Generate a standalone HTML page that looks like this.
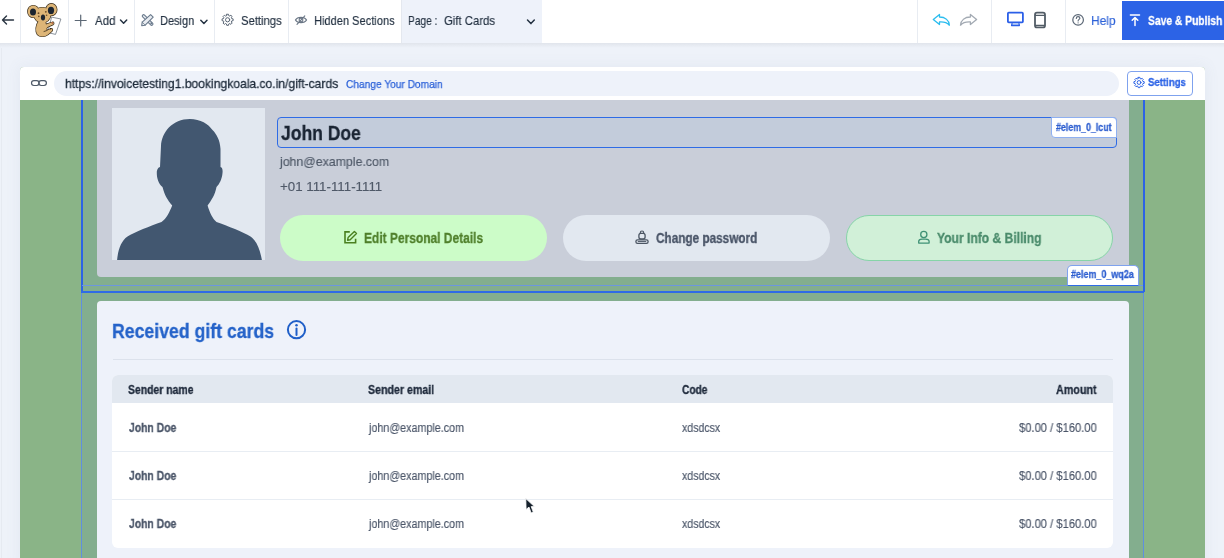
<!DOCTYPE html>
<html><head><meta charset="utf-8">
<style>
*{margin:0;padding:0;box-sizing:border-box}
html,body{width:1224px;height:558px;overflow:hidden;background:#EEF2F9;font-family:"Liberation Sans",sans-serif;color:#223040}
.a{position:absolute}
.t{position:absolute;white-space:nowrap;line-height:1;transform-origin:0 0;will-change:transform}
.sep{position:absolute;top:0;width:1px;height:43px;background:#E8ECF2}
svg{position:absolute;overflow:visible}
</style></head><body>

<!-- top bar -->
<div class="a" style="left:0;top:0;width:1224px;height:43px;background:#fff"></div>
<div class="a" style="left:0;top:43px;width:1224px;height:5px;background:linear-gradient(#E1E5EC,#EEF2F9)"></div>
<div class="sep" style="left:20px"></div>
<div class="a" style="left:1px;top:48px;width:1px;height:510px;background:#E6EAF1"></div>
<div class="sep" style="left:68px"></div>
<div class="sep" style="left:134px"></div>
<div class="sep" style="left:214px"></div>
<div class="sep" style="left:288px"></div>
<div class="a" style="left:401px;top:0;width:141px;height:43px;background:#EEF2FA;border-left:1px solid #E4E8EF"></div>
<div class="sep" style="left:917px"></div>
<div class="sep" style="left:991px"></div>
<div class="sep" style="left:1065px"></div>
<div class="a" style="left:1122px;top:1px;width:102px;height:39px;background:#2C63E6"></div>

<!-- preview frame -->
<div class="a" style="left:20px;top:67px;width:1185px;height:500px;background:#8AB487;border-radius:4px 4px 0 0;box-shadow:0 0 14px 3px rgba(100,115,140,0.055)"></div>
<div class="a" style="left:20px;top:67px;width:1185px;height:33px;background:#fff;border-radius:4px 4px 0 0"></div>
<div class="a" style="left:54px;top:71px;width:1065px;height:25px;background:#EEF2FA;border-radius:13px"></div>
<div class="a" style="left:1127px;top:71px;width:66px;height:25px;border:1px solid #7FA2EE;border-radius:4px;background:#fff"></div>

<!-- section overlay -->
<div class="a" style="left:81px;top:100px;width:1063px;height:458px;background:#83AE8E"></div>
<div class="a" style="left:81px;top:100px;width:1.5px;height:192px;background:#2C63E6"></div>
<div class="a" style="left:1143px;top:100px;width:1.5px;height:192px;background:#2C63E6"></div>
<div class="a" style="left:81px;top:292px;width:1px;height:266px;background:#5F8FE0"></div>
<div class="a" style="left:1143px;top:292px;width:1px;height:266px;background:#5F8FE0"></div>

<!-- profile container -->
<div class="a" style="left:97px;top:100px;width:1032px;height:176.5px;background:#C9CED9;border-radius:0 0 4px 4px"></div>
<div class="a" style="left:112px;top:108px;width:153px;height:152px;background:#E2E8F0;overflow:hidden">
 <svg style="left:0;top:0" width="153" height="152" viewBox="0 0 152 152"><path d="M4.6 152 C5.5 142 8.5 133 15 128.5 C22 124 38 118 49 114 C54 111 57 104 59.7 97.6 C55 92 52 87 50 79 C46 76 44.3 70 44.3 65 C44.3 61 46 59.5 47.5 59 L48.5 38 C49 24 60 11 77.4 10.9 C88 11 96 16 100 22 C104 26 107.5 32 108 41 L108 59 C110 59.5 110.3 62 110 65 C109.5 71 107 76 104 79 C102.5 87 99 92 95.1 97.6 C97 104 100 111 104 114 C115 118 131 124 138 128.5 C144.5 133 147.5 142 149.4 152 Z" fill="#425770"/></svg>
</div>

<div class="a" style="left:277px;top:117px;width:840px;height:31px;background:#C3CCDB;border:1.6px solid #2E6BE6;border-radius:4px"></div>
<div class="a" style="left:1051px;top:117px;width:66px;height:21px;background:#fff;border:1px solid #8FB0F0;border-radius:0 4px 0 4px"></div>

<!-- buttons -->
<div class="a" style="left:280px;top:215px;width:267px;height:46px;background:#CCFCC8;border-radius:23px"></div>
<div class="a" style="left:563px;top:215px;width:267px;height:46px;background:#E2E8F0;border-radius:23px"></div>
<div class="a" style="left:846px;top:215px;width:267px;height:46px;background:#D1F0D8;border:1px solid #86D4A8;border-radius:23px"></div>

<!-- wq2a lines & label -->
<div class="a" style="left:82px;top:285px;width:1061px;height:1px;background:#6C96E0"></div>
<div class="a" style="left:81px;top:291px;width:1063px;height:1.5px;background:#2E6BE6"></div>
<div class="a" style="left:1067px;top:264.5px;width:72px;height:21px;background:#fff;border:1px solid #7FA2EE;border-bottom:1.5px solid #2E6BE6;border-radius:5px 5px 0 0"></div>

<!-- gift cards -->
<div class="a" style="left:97px;top:301px;width:1032px;height:270px;background:#EEF2FA;border-radius:4px"></div>
<div class="a" style="left:113px;top:359px;width:1000px;height:1px;background:#DCE2EC"></div>
<div class="a" style="left:112px;top:375px;width:1001px;height:173px;background:#fff;border-radius:6px;overflow:hidden">
 <div class="a" style="left:0;top:0;width:1001px;height:28px;background:#E2E8F0"></div>
 <div class="a" style="left:0;top:76px;width:1001px;height:1px;background:#E8EDF3"></div>
 <div class="a" style="left:0;top:124px;width:1001px;height:1px;background:#E8EDF3"></div>
</div>

<!-- icons overlay (page coords) -->
<svg style="left:0;top:0" width="1224" height="558" viewBox="0 0 1224 558" fill="none" stroke-linecap="round" stroke-linejoin="round">
 <!-- back arrow -->
 <path d="M6.5 16 L2.5 20 L6.5 24 M2.5 20 H13.5" stroke="#2A3542" stroke-width="1.4"/>
 <!-- koala -->
 <g transform="translate(24,0)">
  <path d="M28 17.2 L36.9 19 L31.5 34.4 L24 32.6 Z" fill="#fff" stroke="#6F7884" stroke-width="0.8"/>
  <g stroke="#3A2E1C" stroke-width="1.4" fill="#3A2E1C">
   <ellipse cx="9.3" cy="11.5" rx="5.5" ry="5.9"/>
   <ellipse cx="27.4" cy="9.7" rx="5.4" ry="5.9"/>
   <ellipse cx="18.3" cy="15.2" rx="8.2" ry="7.6"/>
   <path d="M14.5 21.5 C12 25 11 31 13.5 34.5 C15.5 37 21 37 24 34.5 L27.5 31.5 C29 30.5 28.5 28.5 27 28.8 L23 30.5 C22 29 22.5 27.5 24 26.8 L29 24.5 C30.5 23.5 29.5 21.5 28 22.3 L22 24.5 C21.5 23 21.5 22 21.5 21.5 Z"/>
  </g>
  <g fill="#DDB577">
   <ellipse cx="9.3" cy="11.5" rx="5.5" ry="5.9"/>
   <ellipse cx="27.4" cy="9.7" rx="5.4" ry="5.9"/>
   <ellipse cx="18.3" cy="15.2" rx="8.2" ry="7.6"/>
   <path d="M14.5 21.5 C12 25 11 31 13.5 34.5 C15.5 37 21 37 24 34.5 L27.5 31.5 C29 30.5 28.5 28.5 27 28.8 L23 30.5 C22 29 22.5 27.5 24 26.8 L29 24.5 C30.5 23.5 29.5 21.5 28 22.3 L22 24.5 C21.5 23 21.5 22 21.5 21.5 Z"/>
  </g>
  <ellipse cx="9" cy="12" rx="3" ry="3.5" fill="#1C2530"/>
  <ellipse cx="27" cy="10.4" rx="3.1" ry="3.7" fill="#1C2530"/>
  <ellipse cx="19" cy="17.6" rx="2.1" ry="3" fill="#1C2530"/>
  <circle cx="14.5" cy="13.2" r="0.9" fill="#6a4a25"/><circle cx="21.8" cy="11.8" r="0.9" fill="#6a4a25"/>
  <circle cx="14.8" cy="16.4" r="0.8" fill="#6a4a25"/><circle cx="22.6" cy="15.2" r="0.8" fill="#6a4a25"/>
  <path d="M23 30.5 L20 31.5" stroke="#3A2E1C" stroke-width="0.8"/>
  <circle cx="28.3" cy="23" r="0.7" fill="#b03a2a"/><circle cx="26.5" cy="28.8" r="0.7" fill="#2a1a10"/>
 </g>
 <!-- plus -->
 <path d="M80.7 15 V26 M75.2 20.5 H86.2" stroke="#5D6875" stroke-width="1.2"/>
 <!-- chevrons -->
 <path d="M120.5 20 L123.6 23.2 L126.7 20" stroke="#243242" stroke-width="1.5"/>
 <path d="M200.8 20.2 L203.9 23.4 L207 20.2" stroke="#243242" stroke-width="1.5"/>
 <path d="M527.5 20 L530.9 23.6 L534.3 20" stroke="#243242" stroke-width="1.5"/>
 <!-- design icon -->
 <path d="M143.6 16 L151.6 24" stroke="#6A7A8C" stroke-width="3.8"/>
 <path d="M143.6 16 L151.6 24" stroke="#E9EDF2" stroke-width="1.6"/>
 <circle cx="151.3" cy="23.2" r="1" fill="#6A7A8C" stroke="none"/>
 <path d="M150.6 14.6 L153.2 17.2 L145.2 25.2 L141.7 25.7 L142.2 22.1 Z" stroke="#6A7A8C" stroke-width="1.1" fill="#E9EDF2"/>
 <path d="M142.2 22.1 L145.2 25.2" stroke="#6A7A8C" stroke-width="0.8"/>
 <!-- gear -->
 <path d="M226.72 14.27 L228.48 14.27 L228.75 15.66 L229.72 16.06 L230.89 15.27 L232.13 16.51 L231.34 17.68 L231.74 18.65 L233.13 18.92 L233.13 20.68 L231.74 20.95 L231.34 21.92 L232.13 23.09 L230.89 24.33 L229.72 23.54 L228.75 23.94 L228.48 25.33 L226.72 25.33 L226.45 23.94 L225.48 23.54 L224.31 24.33 L223.07 23.09 L223.86 21.92 L223.46 20.95 L222.07 20.68 L222.07 18.92 L223.46 18.65 L223.86 17.68 L223.07 16.51 L224.31 15.27 L225.48 16.06 L226.45 15.66 Z" stroke="#5A6675" stroke-width="1"/>
 <circle cx="227.6" cy="19.8" r="2.1" stroke="#5A6675" stroke-width="1"/>
 <!-- eye slash -->
 <path d="M295.4 20 C297.5 16.5 304.5 16.5 306.6 20 C304.5 23.5 297.5 23.5 295.4 20 Z" stroke="#6A7685" stroke-width="1.1"/>
 <circle cx="301" cy="20" r="1.9" stroke="#6A7685" stroke-width="1.1"/>
 <path d="M304.8 15.8 L297 24.4" stroke="#6A7685" stroke-width="1.1"/>
 <!-- undo / redo -->
 <path d="M933.3 19.5 L939.5 14.5 L939.5 17 C945 17 949 20 949.4 25.2 C947 22.5 943 21.8 939.5 22 L939.5 24.6 Z" stroke="#2BBDEF" stroke-width="1.3"/>
 <path d="M976.6 19.5 L970.4 14.5 L970.4 17 C964.9 17 960.9 20 960.5 25.2 C962.9 22.5 966.9 21.8 970.4 22 L970.4 24.6 Z" stroke="#A3AAB3" stroke-width="1.3"/>
 <!-- desktop -->
 <rect x="1007.9" y="12.7" width="15" height="9.7" rx="0.8" stroke="#2B5FE8" stroke-width="1.8"/>
 <path d="M1012 23.6 L1011.6 25.6 H1019.4 L1019 23.6" stroke="#2B5FE8" stroke-width="1.3" fill="#9DB8F2"/>
 <!-- mobile -->
 <rect x="1035" y="12.7" width="10" height="14.7" rx="2" stroke="#525C66" stroke-width="1.8"/>
 <path d="M1035.5 15.3 H1044.5 M1035.5 25.3 H1044.5" stroke="#525C66" stroke-width="1.3"/>
 <!-- help -->
 <circle cx="1078.1" cy="19.9" r="5.3" stroke="#5A6675" stroke-width="1.2"/>
 <path d="M1076.3 18.4 C1076.3 17.2 1077 16.6 1078.1 16.6 C1079.2 16.6 1079.9 17.3 1079.9 18.2 C1079.9 19.4 1078.1 19.5 1078.1 21" stroke="#5A6675" stroke-width="1.1"/>
 <circle cx="1078.1" cy="22.8" r="0.6" fill="#5A6675" stroke="none"/>
 <!-- upload -->
 <path d="M1130.4 15 H1139.5 M1135 25.4 V17.6 M1132.2 20.3 L1135 17.5 L1137.8 20.3" stroke="#fff" stroke-width="1.5"/>
 <!-- link -->
 <rect x="31.5" y="80.6" width="7.6" height="4.9" rx="2.4" stroke="#4F5A68" stroke-width="1.2"/>
 <rect x="38.8" y="80.6" width="7.6" height="4.9" rx="2.4" stroke="#4F5A68" stroke-width="1.2"/>
 <!-- settings btn gear -->
 <path d="M1138.24 77.36 L1139.86 77.36 L1140.12 78.65 L1141.02 79.02 L1142.11 78.29 L1143.26 79.44 L1142.53 80.53 L1142.90 81.43 L1144.19 81.69 L1144.19 83.31 L1142.90 83.57 L1142.53 84.47 L1143.26 85.56 L1142.11 86.71 L1141.02 85.98 L1140.12 86.35 L1139.86 87.64 L1138.24 87.64 L1137.98 86.35 L1137.08 85.98 L1135.99 86.71 L1134.84 85.56 L1135.57 84.47 L1135.20 83.57 L1133.91 83.31 L1133.91 81.69 L1135.20 81.43 L1135.57 80.53 L1134.84 79.44 L1135.99 78.29 L1137.08 79.02 L1137.98 78.65 Z" stroke="#2C63E6" stroke-width="1"/>
 <circle cx="1139.05" cy="82.5" r="1.9" stroke="#2C63E6" stroke-width="1"/>
 <!-- edit icon -->
 <path d="M349.8 231.9 H345 V242.8 H355.6 V238.8" stroke="#4A8020" stroke-width="1.6" stroke-linecap="butt" stroke-linejoin="miter"/>
 <path d="M347.6 240.2 L348.1 237.6 L354.4 231.4 L356.5 233.5 L350.2 239.8 Z" stroke="#4A8020" stroke-width="1.4"/>
 <!-- lock icon -->
 <path d="M640.3 233.4 V232.7 A1.7 1.7 0 0 1 643.7 232.7 V233.4" stroke="#4B5563" stroke-width="1.2"/>
 <rect x="638.9" y="233.4" width="6.2" height="5.6" rx="2" stroke="#4B5563" stroke-width="1.3"/>
 <rect x="635.9" y="239.8" width="12.2" height="3.6" rx="1.6" stroke="#4B5563" stroke-width="1.3"/>
 <path d="M638.2 241.5 H645.8" stroke="#4B5563" stroke-width="0.9"/>
 <!-- user icon -->
 <circle cx="923.8" cy="234.5" r="3.1" stroke="#3F9175" stroke-width="1.3"/>
 <path d="M918.7 243.1 V241.6 C918.7 239.8 920 239.1 922 239.1 H925.6 C927.6 239.1 929.1 239.8 929.1 241.6 V243.1 Z" stroke="#3F9175" stroke-width="1.3"/>
 <!-- info icon -->
 <circle cx="296.5" cy="329.7" r="8.6" stroke="#1F5FC8" stroke-width="2"/>
 <circle cx="296.5" cy="325.2" r="1.25" fill="#1F5FC8" stroke="none"/>
 <path d="M296.5 328.6 V335" stroke="#1F5FC8" stroke-width="2"/>
</svg>

<div class="t" style="left:94.50px;top:14.00px;font-size:13px;font-weight:400;color:#243242;transform:scaleX(0.8818);-webkit-text-stroke:0.15px #243242">Add</div>
<div class="t" style="left:160.15px;top:14.00px;font-size:13px;font-weight:400;color:#243242;transform:scaleX(0.8462);-webkit-text-stroke:0.15px #243242">Design</div>
<div class="t" style="left:240.53px;top:14.00px;font-size:13px;font-weight:400;color:#243242;transform:scaleX(0.8652);-webkit-text-stroke:0.15px #243242">Settings</div>
<div class="t" style="left:313.85px;top:14.00px;font-size:13px;font-weight:400;color:#243242;transform:scaleX(0.8516);-webkit-text-stroke:0.15px #243242">Hidden Sections</div>
<div class="t" style="left:407.92px;top:14.00px;font-size:13px;font-weight:400;color:#243242;transform:scaleX(0.7806);-webkit-text-stroke:0.15px #243242">Page :</div>
<div class="t" style="left:444.43px;top:14.00px;font-size:13px;font-weight:400;color:#243242;transform:scaleX(0.8719);-webkit-text-stroke:0.15px #243242">Gift Cards</div>
<div class="t" style="left:1091.08px;top:14.00px;font-size:13px;font-weight:400;color:#2D62D8;transform:scaleX(0.9200);-webkit-text-stroke:0.15px #2D62D8">Help</div>
<div class="t" style="left:1147.91px;top:14.00px;font-size:13px;font-weight:700;color:#ffffff;transform:scaleX(0.7913);-webkit-text-stroke:0.3px #ffffff">Save &amp; Publish</div>
<div class="t" style="left:65.07px;top:77.00px;font-size:13px;font-weight:400;color:#1E2B3A;transform:scaleX(0.9312);-webkit-text-stroke:0.3px #1E2B3A">https://invoicetesting1.bookingkoala.co.in/gift-cards</div>
<div class="t" style="left:346.08px;top:78.50px;font-size:11px;font-weight:400;color:#2A60D8;transform:scaleX(0.9243);-webkit-text-stroke:0.25px #2A60D8">Change Your Domain</div>
<div class="t" style="left:1148.40px;top:77.00px;font-size:10.5px;font-weight:700;color:#2C63E6;transform:scaleX(0.9146);-webkit-text-stroke:0.3px #2C63E6">Settings</div>
<div class="t" style="left:281.00px;top:123.00px;font-size:20.5px;font-weight:700;color:#1A2433;transform:scaleX(0.8538);-webkit-text-stroke:0.3px #1A2433">John Doe</div>
<div class="t" style="left:1056.10px;top:123.00px;font-size:10px;font-weight:700;color:#2E5FD0;transform:scaleX(0.8841);-webkit-text-stroke:0.3px #2E5FD0">#elem_0_lcut</div>
<div class="t" style="left:280.10px;top:155.00px;font-size:13px;font-weight:400;color:#4F5968;transform:scaleX(0.9482);-webkit-text-stroke:0.15px #4F5968">john@example.com</div>
<div class="t" style="left:280.08px;top:180.00px;font-size:13px;font-weight:400;color:#4F5968;transform:scaleX(1.0235);-webkit-text-stroke:0.15px #4F5968">+01 111-111-1111</div>
<div class="t" style="left:364.44px;top:231.00px;font-size:14px;font-weight:700;color:#4F7F2A;transform:scaleX(0.8551);-webkit-text-stroke:0.3px #4F7F2A">Edit Personal Details</div>
<div class="t" style="left:656.06px;top:231.00px;font-size:14px;font-weight:700;color:#4A5568;transform:scaleX(0.8403);-webkit-text-stroke:0.3px #4A5568">Change password</div>
<div class="t" style="left:937.44px;top:231.00px;font-size:14px;font-weight:700;color:#4A8B6B;transform:scaleX(0.8630);-webkit-text-stroke:0.3px #4A8B6B">Your Info &amp; Billing</div>
<div class="t" style="left:1071.40px;top:270.00px;font-size:10px;font-weight:700;color:#2E5FD0;transform:scaleX(0.8957);-webkit-text-stroke:0.3px #2E5FD0">#elem_0_wq2a</div>
<div class="t" style="left:112.24px;top:320.50px;font-size:20.5px;font-weight:700;color:#2563C9;transform:scaleX(0.8624);-webkit-text-stroke:0.3px #2563C9">Received gift cards</div>
<div class="t" style="left:128.03px;top:384.00px;font-size:12px;font-weight:700;color:#1E293B;transform:scaleX(0.8689);-webkit-text-stroke:0.3px #1E293B">Sender name</div>
<div class="t" style="left:367.71px;top:384.00px;font-size:12px;font-weight:700;color:#1E293B;transform:scaleX(0.8863);-webkit-text-stroke:0.3px #1E293B">Sender email</div>
<div class="t" style="left:682.40px;top:384.00px;font-size:12px;font-weight:700;color:#1E293B;transform:scaleX(0.8467);-webkit-text-stroke:0.3px #1E293B">Code</div>
<div class="t" style="left:1055.90px;top:384.00px;font-size:12px;font-weight:700;color:#1E293B;transform:scaleX(0.8956);-webkit-text-stroke:0.3px #1E293B">Amount</div>
<div class="t" style="left:128.50px;top:422.00px;font-size:12px;font-weight:700;color:#4A5568;transform:scaleX(0.8648);-webkit-text-stroke:0.3px #4A5568">John Doe</div>
<div class="t" style="left:368.60px;top:422.00px;font-size:12px;font-weight:400;color:#4A5568;transform:scaleX(0.8943);-webkit-text-stroke:0.15px #4A5568">john@example.com</div>
<div class="t" style="left:682.40px;top:422.00px;font-size:12px;font-weight:400;color:#4A5568;transform:scaleX(0.8814);-webkit-text-stroke:0.15px #4A5568">xdsdcsx</div>
<div class="t" style="left:1018.80px;top:422.00px;font-size:12px;font-weight:400;color:#4A5568;transform:scaleX(0.9325);-webkit-text-stroke:0.15px #4A5568">$0.00 / $160.00</div>
<div class="t" style="left:128.50px;top:470.00px;font-size:12px;font-weight:700;color:#4A5568;transform:scaleX(0.8648);-webkit-text-stroke:0.3px #4A5568">John Doe</div>
<div class="t" style="left:368.60px;top:470.00px;font-size:12px;font-weight:400;color:#4A5568;transform:scaleX(0.8943);-webkit-text-stroke:0.15px #4A5568">john@example.com</div>
<div class="t" style="left:682.40px;top:470.00px;font-size:12px;font-weight:400;color:#4A5568;transform:scaleX(0.8814);-webkit-text-stroke:0.15px #4A5568">xdsdcsx</div>
<div class="t" style="left:1018.80px;top:470.00px;font-size:12px;font-weight:400;color:#4A5568;transform:scaleX(0.9325);-webkit-text-stroke:0.15px #4A5568">$0.00 / $160.00</div>
<div class="t" style="left:128.50px;top:518.00px;font-size:12px;font-weight:700;color:#4A5568;transform:scaleX(0.8648);-webkit-text-stroke:0.3px #4A5568">John Doe</div>
<div class="t" style="left:368.60px;top:518.00px;font-size:12px;font-weight:400;color:#4A5568;transform:scaleX(0.8943);-webkit-text-stroke:0.15px #4A5568">john@example.com</div>
<div class="t" style="left:682.40px;top:518.00px;font-size:12px;font-weight:400;color:#4A5568;transform:scaleX(0.8814);-webkit-text-stroke:0.15px #4A5568">xdsdcsx</div>
<div class="t" style="left:1018.80px;top:518.00px;font-size:12px;font-weight:400;color:#4A5568;transform:scaleX(0.9325);-webkit-text-stroke:0.15px #4A5568">$0.00 / $160.00</div>

<!-- cursor -->
<svg style="left:0;top:0" width="1224" height="558" viewBox="0 0 1224 558">
 <path d="M525.8 498.6 L526.1 509.4 L529 507.1 L531.1 512.9 L533.3 512.1 L531.2 506.6 L534.4 506.6 Z" fill="#15202B" stroke="#fff" stroke-width="0.8" stroke-linejoin="round"/>
</svg>
</body></html>
